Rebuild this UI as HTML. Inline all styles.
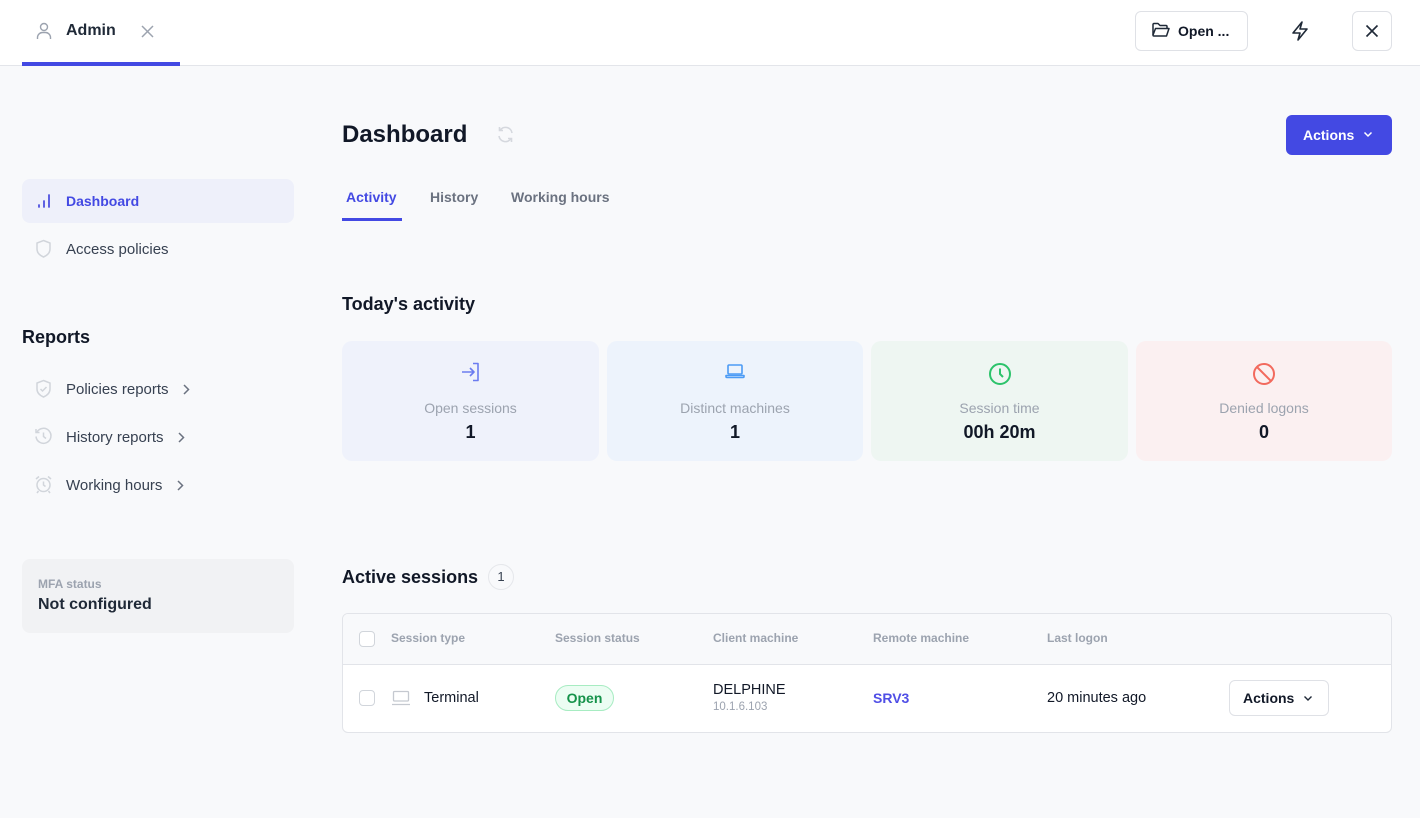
<!DOCTYPE html>
<html><head><meta charset="utf-8"><style>
*{box-sizing:border-box;margin:0;padding:0}
body{width:1420px;height:818px;background:#f8f9fb;font-family:"Liberation Sans",sans-serif;color:#111827;position:relative;overflow:hidden}
.a{position:absolute}
.hdr{left:0;top:0;width:1420px;height:66px;background:#fff;border-bottom:1px solid #e3e5ea}
.btn{background:#fff;border:1px solid #dfe1e6;border-radius:6px}
.t{white-space:nowrap;line-height:1}
.card{top:341px;height:120px;border-radius:10px;text-align:center}
.card .ic{position:absolute;left:50%;top:21px;transform:translateX(-50%)}
.card .l{position:absolute;width:100%;top:59px;font-size:14px;color:#9ca3af}
.card .v{position:absolute;width:100%;top:81px;font-size:18px;font-weight:bold;color:#111827}
.nav{font-size:15px;color:#374151}
.th{font-size:12px;color:#9ca3af;font-weight:bold;top:632px}
.cb{width:16px;height:16px;border:1px solid #d1d5db;border-radius:4px;background:#fff}
.rt{font-size:14.5px}
</style></head><body>
<div class="a hdr"></div>
<svg class="a" style="left:36px;top:22px" width="16" height="18" viewBox="0 0 16 18" fill="none" stroke="#9ca3af" stroke-width="1.4"><circle cx="8" cy="5" r="3.5"/><path d="M1.5 17v-1.5a5 5 0 0 1 5-5h3a5 5 0 0 1 5 5V17"/></svg>
<div class="a t" style="left:66px;top:23px;font-size:16px;font-weight:bold;color:#1f2937">Admin</div>
<svg class="a" style="left:141px;top:25px" width="13" height="13" viewBox="0 0 13 13" stroke="#9ca3af" stroke-width="1.5"><path d="M1 1l11 11M12 1L1 12"/></svg>
<div class="a" style="left:22px;top:62px;width:158px;height:4px;background:#4349e3"></div>

<div class="a btn" style="left:1135px;top:11px;width:113px;height:40px"></div>
<svg class="a" style="left:1152px;top:22px" width="18" height="16" viewBox="0 0 18 16" fill="none" stroke="#1f2937" stroke-width="1.5" stroke-linejoin="round"><path d="M1 13V2.5A1 1 0 0 1 2 1.5h4l2 2h6a1 1 0 0 1 1 1V6"/><path d="M1 13l2.5-6.5h13.5L14.5 14H2a1 1 0 0 1-1-1z"/></svg>
<div class="a t" style="left:1178px;top:24px;font-size:14px;font-weight:bold;color:#111827">Open ...</div>
<svg class="a" style="left:1291px;top:21px" width="18" height="20" viewBox="0 0 18 20" fill="none" stroke="#1f2937" stroke-width="1.6" stroke-linejoin="round"><path d="M11 1L2 12h7l-2 7 9-11H9z"/></svg>
<div class="a btn" style="left:1352px;top:11px;width:40px;height:40px"></div>
<svg class="a" style="left:1365px;top:24px" width="14" height="14" viewBox="0 0 14 14" stroke="#1f2937" stroke-width="1.6"><path d="M1.5 1.5l11 11M12.5 1.5l-11 11"/></svg>

<!-- sidebar -->
<div class="a" style="left:22px;top:179px;width:272px;height:44px;background:#eef0fa;border-radius:8px"></div>
<svg class="a" style="left:37px;top:193px" width="14" height="16" viewBox="0 0 14 16" stroke="#4f52e0" stroke-width="1.8" stroke-linecap="round"><path d="M2 14v-2M7 14V8M12 14V2"/></svg>
<div class="a t" style="left:66px;top:194px;font-size:14px;font-weight:bold;color:#4349e3">Dashboard</div>
<svg class="a" style="left:35px;top:239px" width="17" height="20" viewBox="0 0 17 20" fill="none" stroke="#d1d5db" stroke-width="1.5"><path d="M8.5 1.5L15 4v6c0 4-3 6.5-6.5 8C5 16.5 2 14 2 10V4z"/></svg>
<div class="a t nav" style="left:66px;top:242px">Access policies</div>
<div class="a t" style="left:22px;top:328px;font-size:18px;font-weight:bold;color:#111827">Reports</div>
<svg class="a" style="left:35px;top:379px" width="17" height="20" viewBox="0 0 17 20" fill="none" stroke="#d1d5db" stroke-width="1.5"><path d="M8.5 1.5L15 4v6c0 4-3 6.5-6.5 8C5 16.5 2 14 2 10V4z"/><path d="M5.5 10l2 2 4-4"/></svg>
<div class="a t nav" style="left:66px;top:382px">Policies reports</div>
<svg class="a" style="left:182px;top:384px" width="8" height="11" viewBox="0 0 8 11" fill="none" stroke="#6b7280" stroke-width="1.5"><path d="M2 1l4.5 4.5L2 10"/></svg>
<svg class="a" style="left:34px;top:427px" width="19" height="19" viewBox="0 0 19 19" fill="none" stroke="#d1d5db" stroke-width="1.5"><path d="M3 5a7.5 7.5 0 1 1-1 4.5"/><path d="M2 2v3.5h3.5M9.5 5.5v4l2.5 2"/></svg>
<div class="a t nav" style="left:66px;top:430px">History reports</div>
<svg class="a" style="left:177px;top:432px" width="8" height="11" viewBox="0 0 8 11" fill="none" stroke="#6b7280" stroke-width="1.5"><path d="M2 1l4.5 4.5L2 10"/></svg>
<svg class="a" style="left:34px;top:475px" width="19" height="19" viewBox="0 0 19 19" fill="none" stroke="#d1d5db" stroke-width="1.5"><circle cx="9.5" cy="10" r="6.5"/><path d="M9.5 6.5V10l2 1.5M2 4l3-2.5M17 4l-3-2.5M4.5 16l-1.5 2M14.5 16l1.5 2"/></svg>
<div class="a t nav" style="left:66px;top:478px">Working hours</div>
<svg class="a" style="left:176px;top:480px" width="8" height="11" viewBox="0 0 8 11" fill="none" stroke="#6b7280" stroke-width="1.5"><path d="M2 1l4.5 4.5L2 10"/></svg>
<div class="a" style="left:22px;top:559px;width:272px;height:74px;background:#f1f2f4;border-radius:8px"></div>
<div class="a t" style="left:38px;top:578px;font-size:12px;font-weight:bold;color:#9ca3af">MFA status</div>
<div class="a t" style="left:38px;top:597px;font-size:16px;font-weight:bold;color:#1f2937">Not configured</div>

<!-- main -->
<div class="a t" style="left:342px;top:123px;font-size:24px;font-weight:bold;color:#111827">Dashboard</div>
<svg class="a" style="left:496px;top:125px" width="19" height="19" viewBox="0 0 19 19" fill="none" stroke="#d5d8de" stroke-width="1.6"><path d="M16 8a6.5 6.5 0 0 0-12-2.5M3 11a6.5 6.5 0 0 0 12 2.5"/><path d="M3.5 2v3.5H7M15.5 17v-3.5H12"/></svg>
<div class="a" style="left:1286px;top:115px;width:106px;height:40px;background:#4349e3;border-radius:6px"></div>
<div class="a t" style="left:1303px;top:128px;font-size:14px;font-weight:bold;color:#fff">Actions</div>
<svg class="a" style="left:1363px;top:131px" width="10" height="7" viewBox="0 0 10 7" fill="none" stroke="#fff" stroke-width="1.5"><path d="M1.5 1.5l3.5 3.5 3.5-3.5"/></svg>

<div class="a t" style="left:346px;top:190px;font-size:14px;font-weight:bold;color:#4349e3">Activity</div>
<div class="a t" style="left:430px;top:190px;font-size:14px;font-weight:bold;color:#6b7280">History</div>
<div class="a t" style="left:511px;top:190px;font-size:14px;font-weight:bold;color:#6b7280">Working hours</div>
<div class="a" style="left:342px;top:218px;width:60px;height:3px;background:#4349e3"></div>

<div class="a t" style="left:342px;top:295px;font-size:18px;font-weight:bold;color:#111827">Today's activity</div>

<div class="a card" style="left:342px;width:257px;background:#eff2fb">
<svg class="ic" width="22" height="20" viewBox="0 0 22 20" fill="none" stroke="#6b7cf0" stroke-width="1.6" stroke-linejoin="round"><path d="M13 1.5h5v17h-5M2 10h12M10 6l4 4-4 4"/></svg>
<div class="l">Open sessions</div><div class="v">1</div></div>
<div class="a card" style="left:607px;width:256px;background:#edf3fc">
<svg class="ic" width="22" height="18" viewBox="0 0 22 18" fill="none" stroke="#4c9bf5" stroke-width="1.6" stroke-linejoin="round"><rect x="4" y="3" width="14" height="9" rx="1"/><path d="M2 13.5h18v1a1 1 0 0 1-1 1H3a1 1 0 0 1-1-1z"/></svg>
<div class="l">Distinct machines</div><div class="v">1</div></div>
<div class="a card" style="left:871px;width:257px;background:#eef6f2">
<svg class="ic" width="24" height="24" viewBox="0 0 24 24" fill="none" stroke="#2cc36b" stroke-width="2"><circle cx="12" cy="12" r="10"/><path d="M12 6.5V12l3 3"/></svg>
<div class="l">Session time</div><div class="v">00h 20m</div></div>
<div class="a card" style="left:1136px;width:256px;background:#fbf0f1">
<svg class="ic" width="24" height="24" viewBox="0 0 24 24" fill="none" stroke="#f26a5e" stroke-width="2"><circle cx="12" cy="12" r="10"/><path d="M5 5l14 14"/></svg>
<div class="l">Denied logons</div><div class="v">0</div></div>

<div class="a t" style="left:342px;top:568px;font-size:18px;font-weight:bold;color:#111827">Active sessions</div>
<div class="a" style="left:488px;top:564px;width:26px;height:26px;border:1px solid #e5e7eb;border-radius:13px;font-size:13px;text-align:center;line-height:24px;color:#374151">1</div>

<div class="a" style="left:342px;top:613px;width:1050px;height:120px;border:1px solid #e2e4e9;border-radius:6px;background:#fff;overflow:hidden">
<div style="height:51px;background:#f8f9fb;border-bottom:1px solid #e2e4e9"></div></div>
<div class="a cb" style="left:359px;top:631px"></div>
<div class="a t th" style="left:391px">Session type</div>
<div class="a t th" style="left:555px">Session status</div>
<div class="a t th" style="left:713px">Client machine</div>
<div class="a t th" style="left:873px">Remote machine</div>
<div class="a t th" style="left:1047px">Last logon</div>

<div class="a cb" style="left:359px;top:690px"></div>
<svg class="a" style="left:391px;top:690px" width="20" height="16" viewBox="0 0 20 16" fill="none" stroke="#c5c9d0" stroke-width="1.3"><rect x="2.5" y="1.5" width="15" height="9.5" rx="1"/><path d="M1 14.5h18"/></svg>
<div class="a t rt" style="left:424px;top:691px;color:#111827">Terminal</div>
<div class="a" style="left:555px;top:685px;width:59px;height:26px;border:1px solid #a7ecc2;background:#ecfdf3;border-radius:13px;font-size:14px;font-weight:bold;color:#15924a;text-align:center;line-height:24px">Open</div>
<div class="a t rt" style="left:713px;top:683px;color:#111827">DELPHINE</div>
<div class="a t" style="left:713px;top:702px;font-size:11.5px;color:#9ca3af">10.1.6.103</div>
<div class="a t" style="left:873px;top:691px;font-size:14px;font-weight:bold;color:#4f4ee6">SRV3</div>
<div class="a t rt" style="left:1047px;top:691px;color:#111827">20 minutes ago</div>
<div class="a btn" style="left:1229px;top:680px;width:100px;height:36px"></div>
<div class="a t" style="left:1243px;top:691px;font-size:14px;font-weight:bold;color:#111827">Actions</div>
<svg class="a" style="left:1303px;top:695px" width="10" height="7" viewBox="0 0 10 7" fill="none" stroke="#1f2937" stroke-width="1.4"><path d="M1.5 1.5l3.5 3.5 3.5-3.5"/></svg>
</body></html>
